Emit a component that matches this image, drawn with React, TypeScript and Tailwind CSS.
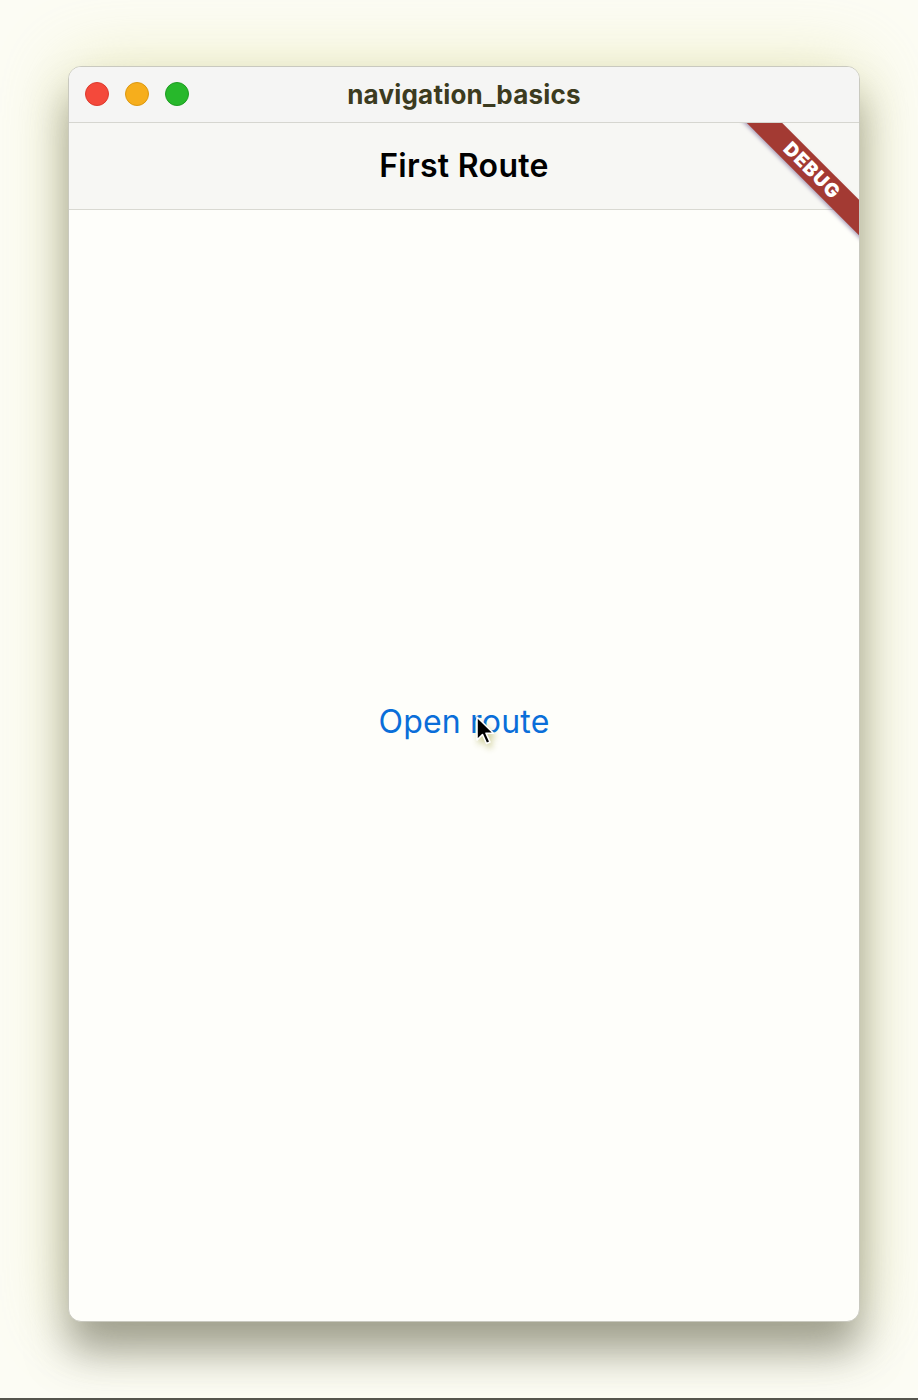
import React from 'react';

const TrafficLight = ({ color, ring }: { color: string; ring: string }) => (
  <span className={`block h-[24px] w-[24px] rounded-full border ${color} ${ring}`} />
);

const Cursor = () => (
  <svg width="22" height="32" viewBox="0 0 22 32" className="absolute left-[473px] top-[714px] drop-shadow-[2px_4px_3px_rgba(150,150,40,0.45)]">
    <path d="M4 3 L4 26 L9.5 20.5 L13.5 29.5 L17 28 L13 19.2 L20.5 19.2 Z" fill="#000" stroke="#fff" strokeWidth="1.6" strokeLinejoin="round" />
  </svg>
);

export default function App() {
  return (
    <div className="relative h-[1400px] w-[918px] overflow-hidden bg-[#fcfcf4] font-['Inter','Liberation_Sans',sans-serif]">
      <div className="ml-[68px] mt-[66px] flex h-[1256px] w-[792px] flex-col overflow-hidden rounded-[13px] border border-[#c9c9bf] bg-[#fefefa] shadow-[0_30px_40px_rgba(80,80,70,0.5),0_0_70px_rgba(215,215,120,0.45)]">
        {/* Title bar */}
        <div className="relative flex h-[56px] shrink-0 items-center border-b border-[#d6d6d0] bg-[#f5f5f4]">
          <div className="absolute left-[16px] top-[15px] flex gap-[16px]">
            <TrafficLight color="bg-[#f4493b]" ring="border-[#dd3a2c]" />
            <TrafficLight color="bg-[#f6ae1c]" ring="border-[#dc9810]" />
            <TrafficLight color="bg-[#27b82b]" ring="border-[#1e9c22]" />
          </div>
          <div className="w-full text-center text-[26px] font-bold leading-none tracking-[0.2px] text-[#3c3b20]">navigation_basics</div>
        </div>

        {/* Nav bar */}
        <div className="relative flex h-[87px] shrink-0 items-center justify-center border-b border-[#d9d9d2] bg-[#f7f7f4]">
          <span className="text-[32px] font-semibold leading-none tracking-[0.3px] text-black">First Route</span>
          <div className="absolute right-0 top-0 h-[120px] w-[120px] overflow-hidden">
            <div className="absolute left-[-27px] top-[35px] flex h-[25px] w-[200px] rotate-45 items-center justify-center bg-[#a33a33] shadow-[0_2px_4px_rgba(80,60,120,0.45)]">
              <span className="text-[19px] font-black leading-none tracking-[1px] text-white">DEBUG</span>
            </div>
          </div>
        </div>

        {/* Body */}
        <div className="flex flex-1 items-center justify-center pb-[88px]">
          <span className="text-[32px] leading-none tracking-[0.2px] text-[#0a6ed9]">Open route</span>
        </div>
      </div>
      <Cursor />
      <div className="absolute bottom-0 left-0 h-[2px] w-full bg-[#55554d]" />
    </div>
  );
}
